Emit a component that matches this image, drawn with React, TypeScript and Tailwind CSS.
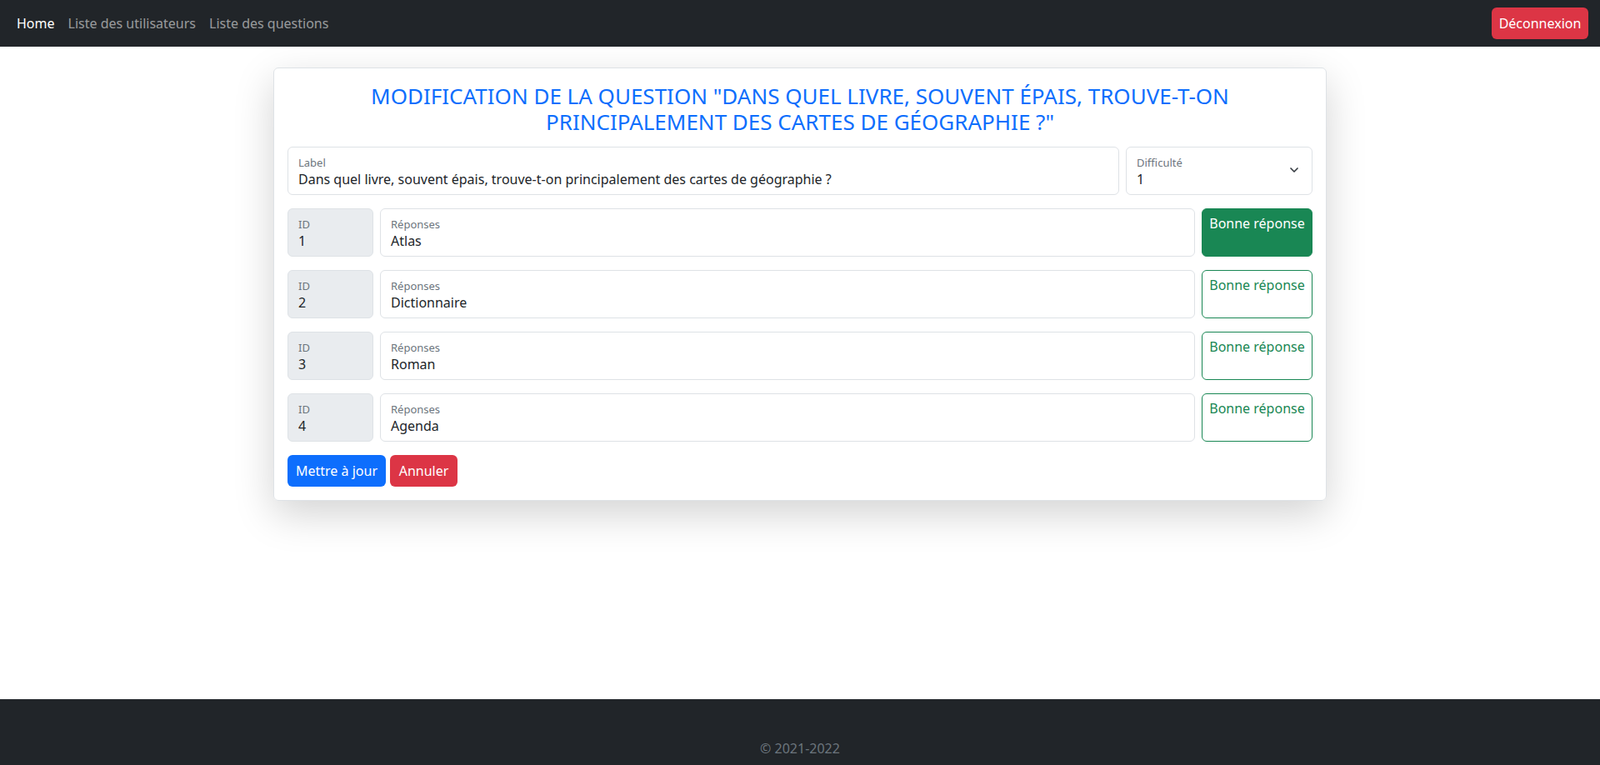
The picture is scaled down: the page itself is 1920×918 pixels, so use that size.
import { ChevronDown } from 'lucide-react';

const answers = [
  { id: 1, text: 'Atlas', good: true },
  { id: 2, text: 'Dictionnaire', good: false },
  { id: 3, text: 'Roman', good: false },
  { id: 4, text: 'Agenda', good: false },
];

function Field({ label, value, className }: { label: string; value: string; className: string }) {
  return (
    <div className={`h-[58px] rounded-[6px] border border-[#dee2e6] px-3 pt-[9px] ${className}`}>
      <div className="text-[13px] leading-[18px] text-[#6c757d]">{label}</div>
      <div className="text-[16px] leading-[22px] text-[#212529]">{value}</div>
    </div>
  );
}

export default function App() {
  return (
    <div className="flex min-h-[918px] flex-col bg-white font-['Lato',sans-serif]">
      <nav className="flex h-[56px] items-center justify-between bg-[#212529] pl-5 pr-[14px]">
        <div className="flex gap-4 text-[16px]">
          <span className="text-white">Home</span>
          <span className="text-[#ffffff8c]">Liste des utilisateurs</span>
          <span className="text-[#ffffff8c]">Liste des questions</span>
        </div>
        <button className="h-[38px] w-[116px] rounded-[6px] bg-[#dc3545] text-[16px] text-white">Déconnexion</button>
      </nav>

      <main className="flex flex-1 justify-center pt-[25px]">
        <div className="h-fit w-[1264px] rounded-[6px] border border-[#dee2e6] p-4 shadow-[0_1rem_3rem_rgba(0,0,0,0.175)]">
          <h4 className="mx-auto mb-[14px] mt-[2px] max-w-[1200px] text-center text-[26px] uppercase leading-[31px] text-[#0d6efd]">
            Modification de la question "Dans quel livre, souvent épais, trouve-t-on principalement des cartes de géographie ?"
          </h4>
          <div className="mb-4 flex gap-2">
            <Field label="Label" value="Dans quel livre, souvent épais, trouve-t-on principalement des cartes de géographie ?" className="flex-1" />
            <div className="relative w-[224px]">
              <Field label="Difficulté" value="1" className="w-full" />
              <ChevronDown className="absolute right-[14px] top-[20px] h-4 w-4 text-[#343a40]" strokeWidth={2.5} />
            </div>
          </div>
          {answers.map((a) => (
            <div key={a.id} className="mb-4 flex gap-2">
              <Field label="ID" value={String(a.id)} className="w-[103px] bg-[#e9ecef]" />
              <Field label="Réponses" value={a.text} className="flex-1" />
              <button
                className={`h-[58px] w-[133px] self-start rounded-[6px] border pb-[22px] text-[16px] ${
                  a.good ? 'border-[#198754] bg-[#198754] text-white' : 'border-[#198754] bg-white text-[#198754]'
                }`}
              >
                Bonne réponse
              </button>
            </div>
          ))}
          <div className="flex gap-[5px]">
            <button className="h-[38px] w-[118px] rounded-[6px] bg-[#0d6efd] text-[16px] text-white">Mettre à jour</button>
            <button className="h-[38px] w-[81px] rounded-[6px] bg-[#dc3545] text-[16px] text-white">Annuler</button>
          </div>
        </div>
      </main>

      <footer className="flex h-[79px] items-end justify-center bg-[#212529] pb-[8px]">
        <span className="text-[16px] text-[#6c757d]">© 2021-2022</span>
      </footer>
    </div>
  );
}
